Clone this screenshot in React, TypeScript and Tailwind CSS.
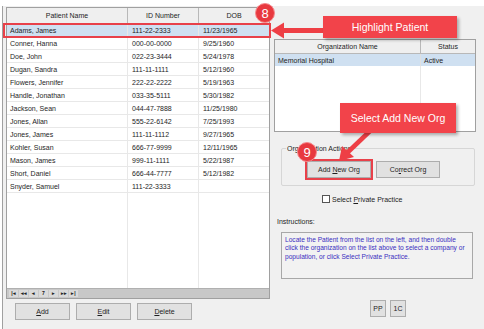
const patients = [
  ["Adams, James", "111-22-2333", "11/23/1965"],
  ["Conner, Hanna", "000-00-0000", "9/25/1960"],
  ["Doe, John", "022-23-3444", "5/24/1978"],
  ["Dugan, Sandra", "111-11-1111", "5/12/1960"],
  ["Flowers, Jennifer", "222-22-2222", "5/19/1963"],
  ["Handle, Jonathan", "033-35-5111", "5/30/1982"],
  ["Jackson, Sean", "044-47-7888", "11/25/1980"],
  ["Jones, Allan", "555-22-6142", "7/25/1993"],
  ["Jones, James", "111-11-1112", "9/27/1965"],
  ["Kohler, Susan", "666-77-9999", "12/11/1965"],
  ["Mason, James", "999-11-1111", "5/22/1987"],
  ["Short, Daniel", "666-44-7777", "5/12/1982"],
  ["Snyder, Samuel", "111-22-3333", ""],
];

function WinButton({ children, className = "" }: { children: React.ReactNode; className?: string }) {
  return (
    <div
      className={`flex items-center justify-center bg-[#e1e1e1] border border-[#adadad] text-[7px] text-[#1e1e1e] ${className}`}
    >
      {children}
    </div>
  );
}

export default function App() {
  return (
    <div className="relative w-[484px] h-[329px] overflow-hidden bg-white font-['Liberation_Sans',Arial,sans-serif] text-[#1e1e1e] leading-none">
      <div className="mt-[6px] ml-[2px] h-[323px] flex border-l border-[#a0a0a0] bg-[#f0f0f0]">
        {/* Left: patient grid */}
        <div className="w-[267px] pl-[3px] pt-[1px] flex flex-col">
          <div className="w-[264px] h-[292px] flex flex-col border border-[#a0a0a0] bg-white">
            <div className="flex h-[16px] bg-[#efefef] border-b border-[#b8b8b8] text-[7px]">
              <div className="w-[121px] flex items-center justify-center border-r border-[#b8b8b8]">Patient Name</div>
              <div className="w-[71px] flex items-center justify-center border-r border-[#b8b8b8]">ID Number</div>
              <div className="flex-1 flex items-center justify-center">DOB</div>
            </div>
            {patients.map(([name, id, dob], i) => (
              <div key={name} className={`flex h-[13px] text-[7px] ${i === 0 ? "bg-[#cfe0f1]" : ""}`}>
                <div className="w-[121px] flex items-center pl-[3px] border-r border-b border-[#e8e8e8]">{name}</div>
                <div className="w-[71px] flex items-center pl-[4px] border-r border-b border-[#e8e8e8]">{id}</div>
                <div className="flex-1 flex items-center pl-[4px] border-b border-[#e8e8e8]">{dob}</div>
              </div>
            ))}
            <div className="flex flex-1">
              <div className="w-[121px] border-r border-[#e8e8e8]" />
              <div className="w-[71px] border-r border-[#e8e8e8]" />
              <div className="flex-1" />
            </div>
            <div className="h-[10px] bg-[#c8c8c8] border-t border-[#b0b0b0] flex items-center pl-[2px] gap-[1px] text-[5px] font-bold text-[#222]">
              {["|◂", "◂◂", "◂", "7", "▸", "▸▸", "▸|"].map((g) => (
                <span key={g} className="w-[9px] h-[7px] flex items-center justify-center bg-[#dadada]">{g}</span>
              ))}
            </div>
          </div>
          <div className="mt-[4px] pl-[9px] flex gap-[6px]">
            <WinButton className="w-[55px] h-[17px]"><span><u>A</u>dd</span></WinButton>
            <WinButton className="w-[55px] h-[17px]"><span><u>E</u>dit</span></WinButton>
            <WinButton className="w-[55px] h-[17px]"><span><u>D</u>elete</span></WinButton>
          </div>
        </div>

        {/* Right: organizations */}
        <div className="ml-[4px] pt-[33px] flex flex-col">
          <div className="w-[202px] h-[93px] flex flex-col border border-[#a0a0a0] bg-white">
            <div className="flex h-[14px] bg-[#efefef] border-b border-[#b8b8b8] text-[7px]">
              <div className="w-[146px] flex items-center justify-center border-r border-[#b8b8b8]">Organization Name</div>
              <div className="flex-1 flex items-center justify-center">Status</div>
            </div>
            <div className="flex h-[12px] bg-[#cfe0f1] text-[7px]">
              <div className="w-[146px] flex items-center pl-[3px] border-r border-[#e0e0e0]">Memorial Hospital</div>
              <div className="flex-1 flex items-center pl-[3px]">Active</div>
            </div>
            <div className="flex flex-1">
              <div className="w-[146px] border-r border-[#e8e8e8]" />
            </div>
          </div>

          <div className="relative mt-[16px] ml-[7px] w-[194px] h-[38px] border border-[#d6d6d6] rounded-[2px] flex gap-[5px] pl-[25px] pt-[12px]">
            <span className="absolute -top-[4px] left-[4px] px-[1px] bg-[#f0f0f0] text-[7px]">Organization Actions</span>
            <WinButton className="w-[64px] h-[17px] outline-2 outline-[#e8414a]"><span>Add <u>N</u>ew Org</span></WinButton>
            <WinButton className="w-[64px] h-[17px]"><span>Co<u>r</u>rect Org</span></WinButton>
          </div>

          <div className="mt-[9px] ml-[48px] flex items-center gap-[2px] text-[7px]">
            <span className="w-[8px] h-[8px] border border-[#555] bg-white" />
            <span>Select <u>P</u>rivate Practice</span>
          </div>

          <div className="mt-[15px] ml-[3px] text-[7px]">Instructions:</div>
          <div className="mt-[7px] ml-[7px] w-[192px] h-[47px] border border-[#a8a8a8] bg-[#f2f2f2] px-[3px] pt-[3px] text-[6.6px] leading-[8.3px] text-[#3a2fbf]">
            Locate the Patient from the list on the left, and then double
            <br />
            click the organization on the list above to select a company or
            <br />
            population, or click Select Private Practice.
          </div>

          <div className="mt-[21px] ml-[96px] flex gap-[4px]">
            <WinButton className="w-[16px] h-[17px] text-[6px]">PP</WinButton>
            <WinButton className="w-[16px] h-[17px] text-[6px]">1C</WinButton>
          </div>
        </div>
      </div>

      {/* Callouts */}
      <div className="absolute left-[3px] top-[23px] w-[268px] h-[15px] border-2 border-[#e8414a]" />
      <div className="absolute left-[255px] top-[3px] w-[20px] h-[20px] rounded-full bg-[#e8393f] border border-[#f58a8d] flex items-center justify-center text-white text-[13px]">8</div>
      <svg className="absolute left-0 top-0" width="484" height="329">
        <polygon points="271,30.5 284,22.5 284,38.5" fill="#ee3f45" />
        <rect x="283" y="28" width="42" height="5" fill="#ee3f45" />
        <line x1="370" y1="131" x2="347" y2="153" stroke="#ee3f45" strokeWidth="4.5" />
        <polygon points="339,161 342,146 354,157" fill="#ee3f45" />
      </svg>
      <div className="absolute left-[323px] top-[16px] w-[134px] h-[22px] bg-[#f2434a] shadow-[2px_2px_3px_rgba(0,0,0,0.3)] flex items-center justify-center text-white text-[10.5px]">
        Highlight Patient
      </div>
      <div className="absolute left-[340px] top-[103px] w-[116px] h-[30px] bg-[#f2434a] shadow-[2px_2px_3px_rgba(0,0,0,0.3)] flex items-center justify-center text-white text-[10.5px]">
        Select Add New Org
      </div>
      <div className="absolute left-[297px] top-[142px] w-[20px] h-[20px] rounded-full bg-[#e8393f] border border-[#f58a8d] flex items-center justify-center text-white text-[13px]">9</div>
    </div>
  );
}
